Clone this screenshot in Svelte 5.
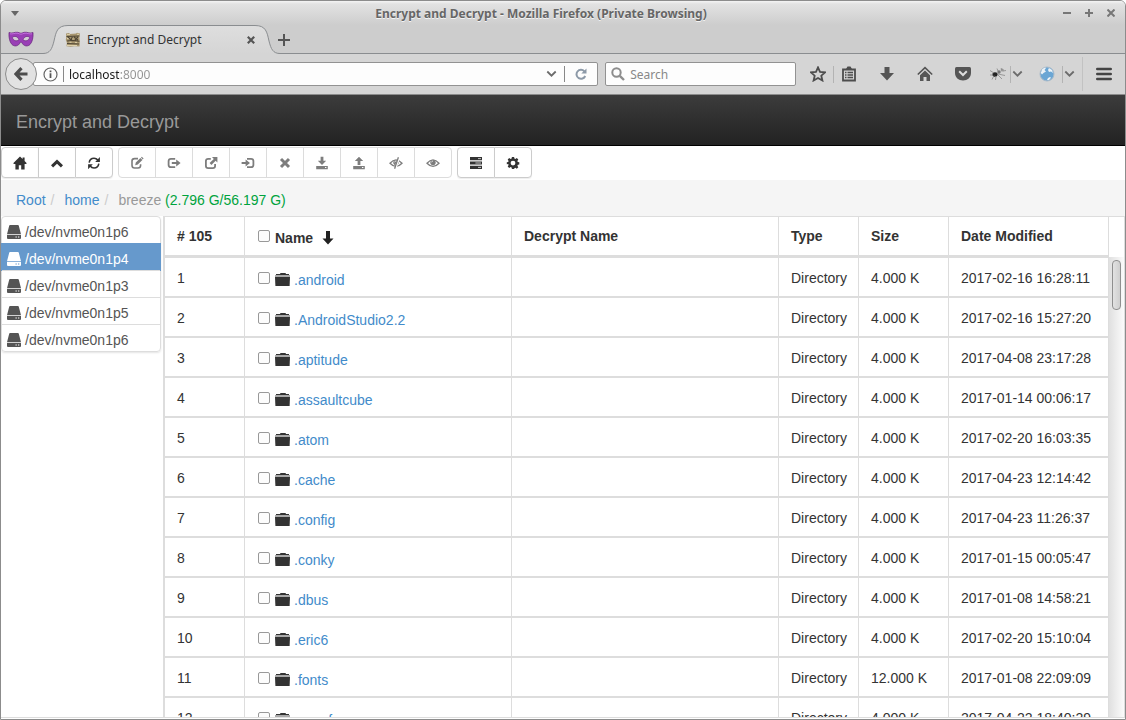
<script>
  const drives = [
    { name: '/dev/nvme0n1p6' },
    { name: '/dev/nvme0n1p4', active: true },
    { name: '/dev/nvme0n1p3' },
    { name: '/dev/nvme0n1p5' },
    { name: '/dev/nvme0n1p6' },
  ];

  const files = [
    ['.android', '4.000 K', '2017-02-16 16:28:11'],
    ['.AndroidStudio2.2', '4.000 K', '2017-02-16 15:27:20'],
    ['.aptitude', '4.000 K', '2017-04-08 23:17:28'],
    ['.assaultcube', '4.000 K', '2017-01-14 00:06:17'],
    ['.atom', '4.000 K', '2017-02-20 16:03:35'],
    ['.cache', '4.000 K', '2017-04-23 12:14:42'],
    ['.config', '4.000 K', '2017-04-23 11:26:37'],
    ['.conky', '4.000 K', '2017-01-15 00:05:47'],
    ['.dbus', '4.000 K', '2017-01-08 14:58:21'],
    ['.eric6', '4.000 K', '2017-02-20 15:10:04'],
    ['.fonts', '12.000 K', '2017-01-08 22:09:09'],
    ['.gconf', '4.000 K', '2017-04-22 18:40:29'],
  ];

  const groups = [
    { tools: ['Home', 'Up', 'Refresh'] },
    {
      disabled: true,
      tools: ['Edit', 'Export', 'Open', 'Import', 'Remove', 'Download', 'Upload', 'Hide', 'Show'],
    },
    { tools: ['Tasks', 'Settings'] },
  ];

  let address = $state('localhost:8000');
  let query = $state('');
</script>

{#snippet glyph(name)}
  <svg class="glyph" viewBox="0 0 14 14" width="14" height="14" aria-hidden="true">
    {#if name === 'Home'}
      <path d="M7 .5.2 7.200 1 8H2.400v5.500H5.800V9.200H8.200v4.300h3.400V8H13l.8-.8-2.200-2.300V1.400H9.600v1.700z" fill="currentColor" />
    {:else if name === 'Up'}
      <path d="M7 3.500 13 9.300 10.900 11.400 7 7.700 3.100 11.400 1 9.300z" fill="currentColor" />
    {:else if name === 'Refresh'}
      <path d="M2.200 6.600C2.600 3.800 4.700 2.200 7 2.200c1.600 0 2.900.7 3.800 1.900M11.800 7.600C11.400 10.200 9.400 12 7 12c-1.600 0-2.900-.7-3.800-1.900" fill="none" stroke="currentColor" stroke-width="1.600" />
      <path d="M12.900 1v5H8.200zM1.100 13.200v-5h4.700z" fill="currentColor" />
    {:else if name === 'Edit'}
      <path d="M8 2.600H4.600Q2 2.600 2 5v4.300Q2 12 4.600 12H8q2.600 0 2.600-2.700V8.200" fill="none" stroke="currentColor" stroke-width="1.600" />
      <path d="m5.200 9.200.6-2.600 4.600-4.500 2 1.900-4.600 4.500zM11 1.600l.8-.8 1.800 1.800-.8.8z" fill="currentColor" />
    {:else if name === 'Export'}
      <path d="M8.200 2.800H4Q1.600 2.800 1.600 5v4Q1.600 11.200 4 11.200h4.200" fill="none" stroke="currentColor" stroke-width="1.800" />
      <path d="M4.800 5.900h4.400V3.600L13.600 7 9.200 10.400V8.100H4.800z" fill="currentColor" />
    {:else if name === 'Open'}
      <path d="M6.800 2.900H4.200Q1.900 2.900 1.900 5v5Q1.900 12.100 4.200 12.100h4.600q2.300 0 2.300-2.100V8" fill="none" stroke="currentColor" stroke-width="1.800" />
      <path d="M8 1h5.400v5.400l-1.800-1.700-4.200 4.200L5.600 7.100l4.200-4.200z" fill="currentColor" />
    {:else if name === 'Import'}
      <path d="M6 2.800h4Q12.400 2.800 12.400 5v4Q12.400 11.200 10 11.200H6" fill="none" stroke="currentColor" stroke-width="1.800" />
      <path d="M.6 5.900h4V3.600L9 7 4.600 10.400V8.100h-4z" fill="currentColor" />
    {:else if name === 'Remove'}
      <path d="m3 3 8 8M11 3l-8 8" fill="none" stroke="currentColor" stroke-width="3" />
    {:else if name === 'Download'}
      <path d="M5.600.8h2.800v4h2.800L7 9 2.800 4.800h2.800zM1.200 10h11.600v3.200H1.200z" fill="currentColor" />
      <path d="M10 11.500h1.400" stroke="#fff" />
    {:else if name === 'Upload'}
      <path d="M7 .8l4.200 4.200H8.400V9H5.600V5H2.800zM1.200 10h11.600v3.200H1.200z" fill="currentColor" />
      <path d="M10 11.500h1.400" stroke="#fff" />
    {:else if name === 'Hide' || name === 'Show'}
      <path d="M1 7.200Q7 .4 13 7.200 7 13.600 1 7.200z" fill="none" stroke="currentColor" stroke-width="1.300" />
      <circle cx="7" cy="6.600" r="2.700" fill="currentColor" />
      <path d="M5.600 6.300q.2-1.200 1.200-1.300" fill="none" stroke="#fff" stroke-width=".8" />
      {#if name === 'Hide'}
        <path d="M10.200.8 6 13.400" stroke="#fff" stroke-width="2.200" />
        <path d="M9.400 1.200 5.600 12.800" stroke="currentColor" stroke-width="1.300" />
      {/if}
    {:else if name === 'Tasks'}
      <path d="M1 1h12v3.200H1zM1 5.400h12v3.200H1zM1 9.800h12V13H1z" fill="currentColor" />
      <path d="M9 2.600h3M6.400 7H12M9 11.400h3" stroke="#fff" stroke-width=".7" />
    {:else}
      <path d="M5.900 1h2.200l.3 1.600 1 .4 1.400-.9 1.500 1.500-.9 1.400.4 1 1.500.3v2.200l-1.500.3-.4 1 .9 1.400-1.500 1.500-1.400-.9-1 .4L8.100 13H5.900l-.3-1.500-1-.4-1.400.9-1.500-1.500.9-1.400-.4-1L.8 8.200V6.300L2.200 6l.4-1-.9-1.400 1.500-1.500 1.400.9 1-.4zM7 4.700a2.400 2.400 0 1 0 0 4.800 2.400 2.400 0 0 0 0-4.800z" fill="currentColor" fill-rule="evenodd" />
    {/if}
  </svg>
{/snippet}

{#snippet chevron()}
  <svg width="11" height="8" viewBox="0 0 11 8" aria-hidden="true"><path d="m1.300 1.500 4.200 4.200 4.200-4.200" fill="none" stroke="#6c6c6c" stroke-width="1.800" /></svg>
{/snippet}

<div class="window">
  <header class="chrome">
    <div class="titlebar">
      <button class="wm menu" aria-label="Window menu">
        <svg width="8" height="5"><path d="M0 0h8L4 5z" fill="#666" /></svg>
      </button>
      <div class="title">Encrypt and Decrypt - Mozilla Firefox (Private Browsing)</div>
      <button class="wm" aria-label="Minimize"><svg width="8" height="8"><path d="M0 4h8" stroke="#777" stroke-width="2" /></svg></button>
      <button class="wm" aria-label="Maximize"><svg width="8" height="8"><path d="M0 4h8M4 0v8" stroke="#777" stroke-width="2" /></svg></button>
      <button class="wm" aria-label="Close"><svg width="8" height="8"><path d="m.5.5 7 7M7.500.5l-7 7" stroke="#777" stroke-width="2" /></svg></button>
    </div>

    <div class="tabs">
      <svg class="mask" width="26" height="18" viewBox="0 0 26 18" aria-hidden="true">
        <path d="M1 1.500C4 3 6.500.8 9.500 1.300c1.500.2 2.500 1 3.500 1s2-.8 3.500-1C19.500.8 22 3 25 1.500c.3 5-.6 9.500-3 12-2 2-5.500 1.800-7.200-.4C14 12 13.700 11 13 11s-1 1-1.800 2.100C9.500 15.300 6 15.500 4 13.500c-2.400-2.500-3.300-7-3-12z" fill="#9a3fb6" stroke="#6b2a80" stroke-width=".8" />
        <path d="M2 2.800c2.500.7 5-1.200 8-.5 1 .3 2 .9 3 .9s2-.6 3-.9c3-.7 5.500 1.200 8 .5" fill="none" stroke="#c46fdd" stroke-width="1" />
        <path d="M4.300 6.500c2-2 5.400-1.200 6.700 2.200C8.800 10.700 5.300 10 4.300 6.500zM21.700 6.500c-2-2-5.400-1.200-6.700 2.200 2.200 2 5.700 1.300 6.700-2.200z" fill="#d2cdd4" stroke="#6b2a80" stroke-width=".7" />
      </svg>
      <div class="tab">
        <svg class="shape" width="237" height="29" viewBox="0 0 237 29" aria-hidden="true">
          <defs><linearGradient id="tabfill" x1="0" y1="0" x2="0" y2="1"><stop offset="0" stop-color="#dedede" /><stop offset="1" stop-color="#d5d5d5" /></linearGradient></defs>
          <path d="M0 28.500C7 28.500 9 24 11 16 13 7 14 .5 25 .5H212C223 .5 224 7 226 16c2 8 4 12.500 11 12.500V29H0z" fill="url(#tabfill)" />
          <path d="M0 28.500C7 28.500 9 24 11 16 13 7 14 .5 25 .5H212C223 .5 224 7 226 16c2 8 4 12.500 11 12.500" fill="none" stroke="#8a8d90" />
        </svg>
        <svg class="favicon" width="16" height="16" viewBox="0 0 16 16" aria-hidden="true">
          <path d="M1 1.500 4 1l1 1 6-.6L12 .8l3 .6-.6 3 .4 7-.3 3-5-.2-4 .6-4-.5.4-3.500L.8 8l.5-3z" fill="#a8966f" />
          <path d="M1.500 4.500 14.500 4M2 9l5-.6 7.500.8M2 11.500l12 .5M3 5l3 3M7.500 4.500 6 8M9 5l4 3M13 5l-3 3" fill="none" stroke="#4f4635" stroke-width="1.100" />
          <path d="M2 13.500h10M2 2.600h3M12 2.300h2M4.500 10.200h2M10 10.400h2M2 6.500h1.500M7.500 7h1" stroke="#dfd2ac" />
        </svg>
        <span class="tabtitle">Encrypt and Decrypt</span>
        <button class="plain" aria-label="Close tab"><svg width="8" height="8"><path d="m.8.8 6.400 6.400M7.200.8.8 7.200" stroke="#555" stroke-width="2.200" /></svg></button>
      </div>
      <button class="plain newtab" aria-label="New tab"><svg width="12" height="12"><path d="M0 6h12M6 0v12" stroke="#555" stroke-width="2" /></svg></button>
    </div>

    <div class="navbar">
      <button class="back" aria-label="Back">
        <svg width="14" height="14" viewBox="0 0 14 14"><path d="M7.500 1.200 2 7l5.500 5.800M2.500 7H13.500" fill="none" stroke="#4d4d4d" stroke-width="3.200" /></svg>
      </button>
      <div class="field url">
        <svg width="15" height="15" viewBox="0 0 15 15" aria-hidden="true"><circle cx="7.500" cy="7.500" r="6.500" fill="none" stroke="#666" stroke-width="1.200" /><path d="M7.500 6.300v4.700M7.500 3.600v1.700" stroke="#555" stroke-width="1.800" /></svg>
        <span class="rule"></span>
        <input class="address" aria-label="Address" bind:value={address} />
        <button class="plain" aria-label="Show history">{@render chevron()}</button>
        <span class="rule reloadrule"></span>
        <button class="plain reload" aria-label="Reload">
          <svg width="12" height="12" viewBox="0 0 12 12"><path d="M9.300 3.200A4.500 4.500 0 1 0 10.200 8" fill="none" stroke="#8d9aa8" stroke-width="2" /><path d="M11.500.5v5H6.300z" fill="#8d9aa8" /></svg>
        </button>
      </div>
      <div class="field search">
        <svg width="14" height="14" viewBox="0 0 14 14" aria-hidden="true"><circle cx="5.500" cy="5.500" r="4.200" fill="none" stroke="#8d8d8d" stroke-width="2" /><path d="m8.800 8.800 4.200 4.200" stroke="#8d8d8d" stroke-width="2.400" /></svg>
        <input aria-label="Search" placeholder="Search" bind:value={query} />
      </div>
      <div class="actions">
        <button class="act narrow" aria-label="Bookmark this page"><svg width="16" height="16" viewBox="0 0 16 16"><path d="m8 1.400 2 4.500 5 .5-3.700 3.300 1.100 4.800L8 12l-4.400 2.500 1.100-4.800L1 6.400l5-.5z" fill="none" stroke="#4d4d4d" stroke-width="1.800" /></svg></button>
        <span class="split"></span>
        <button class="act narrow" aria-label="Bookmarks"><svg width="16" height="16" viewBox="0 0 16 16"><path d="M2 3.500h12v11H2z" fill="none" stroke="#4d4d4d" stroke-width="1.800" /><path d="M5 3l1.500-2.500h3L11 3z" fill="#4d4d4d" /><path d="M4 6.500h1.500m1 0H12M4 9h1.500m1 0H12m-8 2.500h1.500m1 0H12" stroke="#4d4d4d" stroke-width="1.300" /></svg></button>
        <button class="act" aria-label="Downloads"><svg width="16" height="16" viewBox="0 0 16 16"><path d="M5.500 1h5v6H15l-7 7.500L1 7h4.500z" fill="#555" /></svg></button>
        <button class="act" aria-label="Home page"><svg width="16" height="16" viewBox="0 0 16 16"><path d="M.8 8.500 8 1.600l7.200 6.900" fill="none" stroke="#555" stroke-width="1.600" /><path d="M3 9.200 8 4.600l5 4.600V15H9.500v-4h-3v4H3z" fill="#555" /></svg></button>
        <button class="act" aria-label="Pocket"><svg width="16" height="16" viewBox="0 0 16 16"><path d="M1.500 1h13q1.500 0 1.500 1.500V7c0 4.500-3.500 7.500-8 7.500S0 11.500 0 7V2.500Q0 1 1.500 1z" fill="#555" /><path d="M4.200 5.300 8 9l3.800-3.700" fill="none" stroke="#ddd" stroke-width="2" /></svg></button>
        <button class="act addon" aria-label="Debugger"><svg width="16" height="14" viewBox="0 0 16 14"><ellipse cx="5" cy="7.500" rx="2.600" ry="2.300" fill="#222" /><circle cx="9" cy="5" r="1.700" fill="#777" /><circle cx="12.200" cy="3" r="1.600" fill="#999" /><path d="M0 3.500 4 6M0 8l3 0M2 12.500l2-4M5.500 13 6 9M8 7l7 1.500M8 8l4 4M7 1.500 8 4M11 1l1 2M13 4l3-.5" fill="none" stroke="#888" stroke-width=".8" /></svg></button>
        <span class="split"></span>
        <button class="act drop" aria-label="Debugger options">{@render chevron()}</button>
        <button class="act globe" aria-label="Proxy"><svg width="16" height="16" viewBox="0 0 16 16"><circle cx="8" cy="8" r="7" fill="#6ba6d4" stroke="#a9bac9" /><path d="M3 3.500C4.500 2 6 1.500 7 2L5.500 4 7 5.500 4.500 7 3 8.500 1.800 7zM10 2l3 2 1 3-2-1.500-2 .5L9 4zM9 12l2-1 1 .8L10 14H8z" fill="#eef3f7" /></svg></button>
        <span class="split"></span>
        <button class="act drop" aria-label="Proxy options">{@render chevron()}</button>
        <span class="split tall"></span>
        <button class="act hamburger" aria-label="Open menu"><svg width="16" height="14" viewBox="0 0 16 14"><path d="M1.300 2h13.400M1.300 7h13.400M1.300 12h13.400" stroke="#444" stroke-width="2.600" stroke-linecap="round" /></svg></button>
      </div>
    </div>
  </header>

  <div class="page">
    <nav class="brandbar"><a href="#top">Encrypt and Decrypt</a></nav>

    <div class="toolbar">
      {#each groups as group}
        <div class="group">
          {#each group.tools as tool}
            <button class="tool" disabled={group.disabled} aria-label={tool}>{@render glyph(tool)}</button>
          {/each}
        </div>
      {/each}
    </div>

    <ol class="crumbs">
      <li><a href="#root">Root</a></li>
      <li><a href="#home">home</a></li>
      <li class="current">breeze <span class="usage">(2.796 G/56.197 G)</span></li>
    </ol>

    <main>
      <div class="side">
        <ul class="drives">
          {#each drives as drive}
            <li>
              <a href="#drive" class:active={drive.active}>
                <svg width="14" height="14" viewBox="0 0 14 14" aria-hidden="true"><path d="M3 0h8q.6 0 .8.8L14 9.300H0L2.200.8Q2.400 0 3 0zM0 10h14v3q0 1-1 1H1q-1 0-1-1z" fill="currentColor" /><path class="led" d="M8.500 12h1.300M11 12h1.300" /></svg>
                {drive.name}
              </a>
            </li>
          {/each}
        </ul>
      </div>

      <div class="listing">
        <table>
          <colgroup>
            <col class="c-num" /><col /><col /><col class="c-type" /><col class="c-size" /><col class="c-date" />
          </colgroup>
          <thead>
            <tr>
              <th># 105</th>
              <th>
                <div class="entry">
                  <input type="checkbox" aria-label="Select all" />
                  <span class="label">Name</span>
                  <svg class="sort" width="12" height="14" viewBox="0 0 12 14" aria-hidden="true"><path d="M4 0h4v7.500h3.500L6 13.500.5 7.500H4z" fill="#222" /></svg>
                </div>
              </th>
              <th>Decrypt Name</th>
              <th>Type</th>
              <th>Size</th>
              <th>Date Modified</th>
            </tr>
          </thead>
          <tbody>
            {#each files as [name, size, date], i}
              <tr>
                <td>{i + 1}</td>
                <td>
                  <div class="entry">
                    <input type="checkbox" aria-label={`Select ${name}`} />
                    <svg class="folder" width="15" height="13" viewBox="0 0 15 13" aria-hidden="true"><path d="M1 1h4l.5-1h5l.5 1h3v1.500H1z" fill="#333" /><path d="M0 2h15v2H0z" fill="#aaa" /><path d="M0 4h15l-.4 9H.4z" fill="#333" /></svg>
                    <a class="label" href="#file">{name}</a>
                  </div>
                </td>
                <td></td>
                <td>Directory</td>
                <td>{size}</td>
                <td>{date}</td>
              </tr>
            {/each}
          </tbody>
        </table>
      </div>
      <div class="scroll" aria-hidden="true">
        <div class="corner"></div>
        <div class="track"><div class="thumb"></div></div>
      </div>
    </main>
  </div>
</div>

<style>
  :global(body) { background: #fff; }
  * { box-sizing: border-box; }
  button { padding: 0; font: inherit; }
  input { min-width: 0; font: inherit; }
  a { text-decoration: none; color: #428bca; }
  svg { display: block; flex: none; }

  .window {
    display: flex;
    flex-direction: column;
    height: 100vh;
    overflow: hidden;
    border: 1px solid #8c8c8c;
    border-radius: 6px 6px 0 0;
    background: #fff;
  }

  .chrome {
    flex: none;
    font: 12px "Noto Sans", sans-serif;
    background: linear-gradient(#f4f4f4, #e2e2e2 3px, #cdcdcd 24px);
    color: #333;
  }
  .titlebar { display: flex; align-items: center; height: 24px; padding: 0 3px; }
  .title {
    flex: 1;
    text-align: center;
    font-weight: 700;
    color: #666;
    text-shadow: 0 1px 0 #f4f4f4;
  }
  .wm { display: flex; align-items: center; justify-content: center; width: 22px; height: 22px; border: 0; background: none; }

  .tabs { display: flex; align-items: flex-end; height: 29px; box-shadow: inset 0 -1px #8a8d90; }
  .mask { margin: 0 9px 5px 7px; }
  .tab { position: relative; display: flex; align-items: center; width: 237px; height: 29px; padding: 0 25px 0 22px; }
  .tab .shape { position: absolute; inset: 0; }
  .tab .favicon, .tab .tabtitle, .tab button { position: relative; }
  .tabtitle { flex: 1; margin-left: 6px; }
  .plain { display: flex; align-items: center; justify-content: center; border: 0; background: none; }
  .newtab { height: 29px; margin-left: -2px; }

  .navbar { display: flex; align-items: center; height: 41px; padding: 0 9px 0 4px; background: #d5d5d5; border-bottom: 1px solid #8c8c8c; }
  .back {
    position: relative;
    display: flex;
    align-items: center;
    justify-content: center;
    flex: none;
    width: 32px;
    height: 32px;
    border: 1px solid #8c8c8c;
    border-radius: 50%;
    background: #e2e2e2;
  }
  .field { display: flex; align-items: center; height: 24px; border: 1px solid #929292; border-radius: 2px; background: #fdfdfd; min-width: 0; }
  .field input { flex: 1; width: 0; padding: 0; border: 0; outline: 0; background: none; }
  .url { flex: 567 1 0; margin-left: -4px; padding-left: 9px; }
  .rule { width: 1px; height: 16px; background: #888; margin: 0 5px; }
  .url .address {
    height: 22px;
    background: linear-gradient(90deg, #1a1a1a 50px, #929292 50px);
    background-clip: text;
    -webkit-background-clip: text;
    -webkit-text-fill-color: transparent;
  }
  .reloadrule { margin: 0 0 0 7px; }
  .reload { width: 32px; }
  .search { flex: 188 1 0; margin-left: 7px; padding-left: 5px; }
  .search input { margin-left: 5px; }
  .search input::placeholder { color: #888; opacity: 1; }
  .actions { display: flex; align-items: center; flex: none; margin-left: 7px; }
  .act { display: flex; align-items: center; justify-content: center; width: 38px; height: 30px; border: 0; background: none; }
  .act.narrow { width: 30px; }
  .act.narrow + .act { margin-left: 4px; }
  .act.addon { width: 28px; padding-left: 4px; }
  .act.drop { width: 13px; }
  .act.globe { width: 38px; padding-left: 8px; }
  .act.hamburger { width: 24px; margin-left: 9px; }
  .split { width: 1px; height: 17px; background: #b3b3b3; }
  .split.tall { height: 34px; margin-left: 6px; background: #c2c2c2; }

  .page {
    flex: 1;
    display: flex;
    flex-direction: column;
    min-height: 0;
    font: 14px/20px "Liberation Sans", Arial, sans-serif;
    color: #333;
  }
  .brandbar {
    display: flex;
    align-items: center;
    flex: none;
    height: 51px;
    padding: 3px 15px 0;
    border-bottom: 1px solid #000;
    background: linear-gradient(#3c3c3c, #222);
    font-size: 18px;
  }
  .brandbar a { color: #999; }

  .toolbar { display: flex; flex: none; gap: 5px; padding: 1px 0 2px; }
  .group { display: flex; border-radius: 4px; }
  .tool {
    display: flex;
    align-items: center;
    justify-content: center;
    width: 38px;
    height: 31px;
    border: 1px solid #ccc;
    background: #fff;
    color: #333;
    box-shadow: 0 1px 1px #eee;
  }
  .tool + .tool { margin-left: -1px; }
  .tool:first-child { border-radius: 4px 0 0 4px; }
  .tool:last-child { border-radius: 0 4px 4px 0; }
  .tool:disabled { border-color: #dcdcdc; color: #7d7d7d; box-shadow: none; }

  .crumbs { display: flex; flex: none; height: 36px; margin: 0; padding: 10px 15px 6px; list-style: none; background: #f5f5f5; }
  .crumbs li + li::before { content: "/"; padding: 0 10px 0 5px; color: #ccc; }
  .current { color: #999; }
  .usage { color: #00a33d; }

  main { display: flex; flex: 1; min-height: 0; margin-bottom: 1px; border-bottom: 1px solid #ddd; }
  .side { flex: none; width: 162px; }
  .drives { margin: 0 2px 0 0; padding: 0; list-style: none; border: 1px solid #ddd; border-radius: 4px; box-shadow: 0 1px 2px #e4e4e4; }
  .drives li + li { border-top: 1px solid #ddd; }
  .drives a { display: flex; align-items: center; gap: 4px; height: 26px; padding: 3px 5px 0; color: #555; }
  .drives a.active { height: 28px; margin: -1px; padding: 3px 6px 0; background: #6699cc; color: #fff; }
  .led { stroke: #fff; stroke-width: 1; }
  .active .led { stroke: #6699cc; }

  .listing { flex: 1; min-width: 0; overflow: hidden; border-left: 2px solid #ddd; }
  table { width: 100%; table-layout: fixed; border-collapse: separate; border-spacing: 0; }
  .c-num { width: 80px; }
  .c-type { width: 80px; }
  .c-size { width: 90px; }
  .c-date { width: 160px; }
  th, td { padding: 0 12px; border-right: 1px solid #ddd; text-align: left; white-space: nowrap; }
  th { height: 42px; border-top: 1px solid #ddd; border-bottom: 3px solid #ddd; }
  td { height: 40px; padding-top: 2px; border-bottom: 2px solid #ddd; }
  .entry { display: flex; align-items: center; }
  .entry input { flex: none; appearance: none; width: 12px; height: 12px; margin: 0 5px 0 1px; border: 1px solid #999; border-radius: 2px; background: #fcfcfc; }
  .entry .label { padding-top: 4px; }
  .folder { margin: 2px 4px 0 0; }
  .sort { margin: 3px 0 0 9px; }

  .scroll { display: flex; flex-direction: column; flex: none; width: 16px; border-right: 1px solid #ddd; }
  .corner { flex: none; height: 41px; border-top: 1px solid #ddd; }
  .track { flex: 1; padding: 3px; background: linear-gradient(90deg, #e0e0e0, #fbfbfb); }
  .thumb { width: 9px; height: 50px; border: 1px solid #8f8f8f; border-radius: 4px; background: linear-gradient(90deg, #e2e2e2, #cfcfcf); }
</style>
